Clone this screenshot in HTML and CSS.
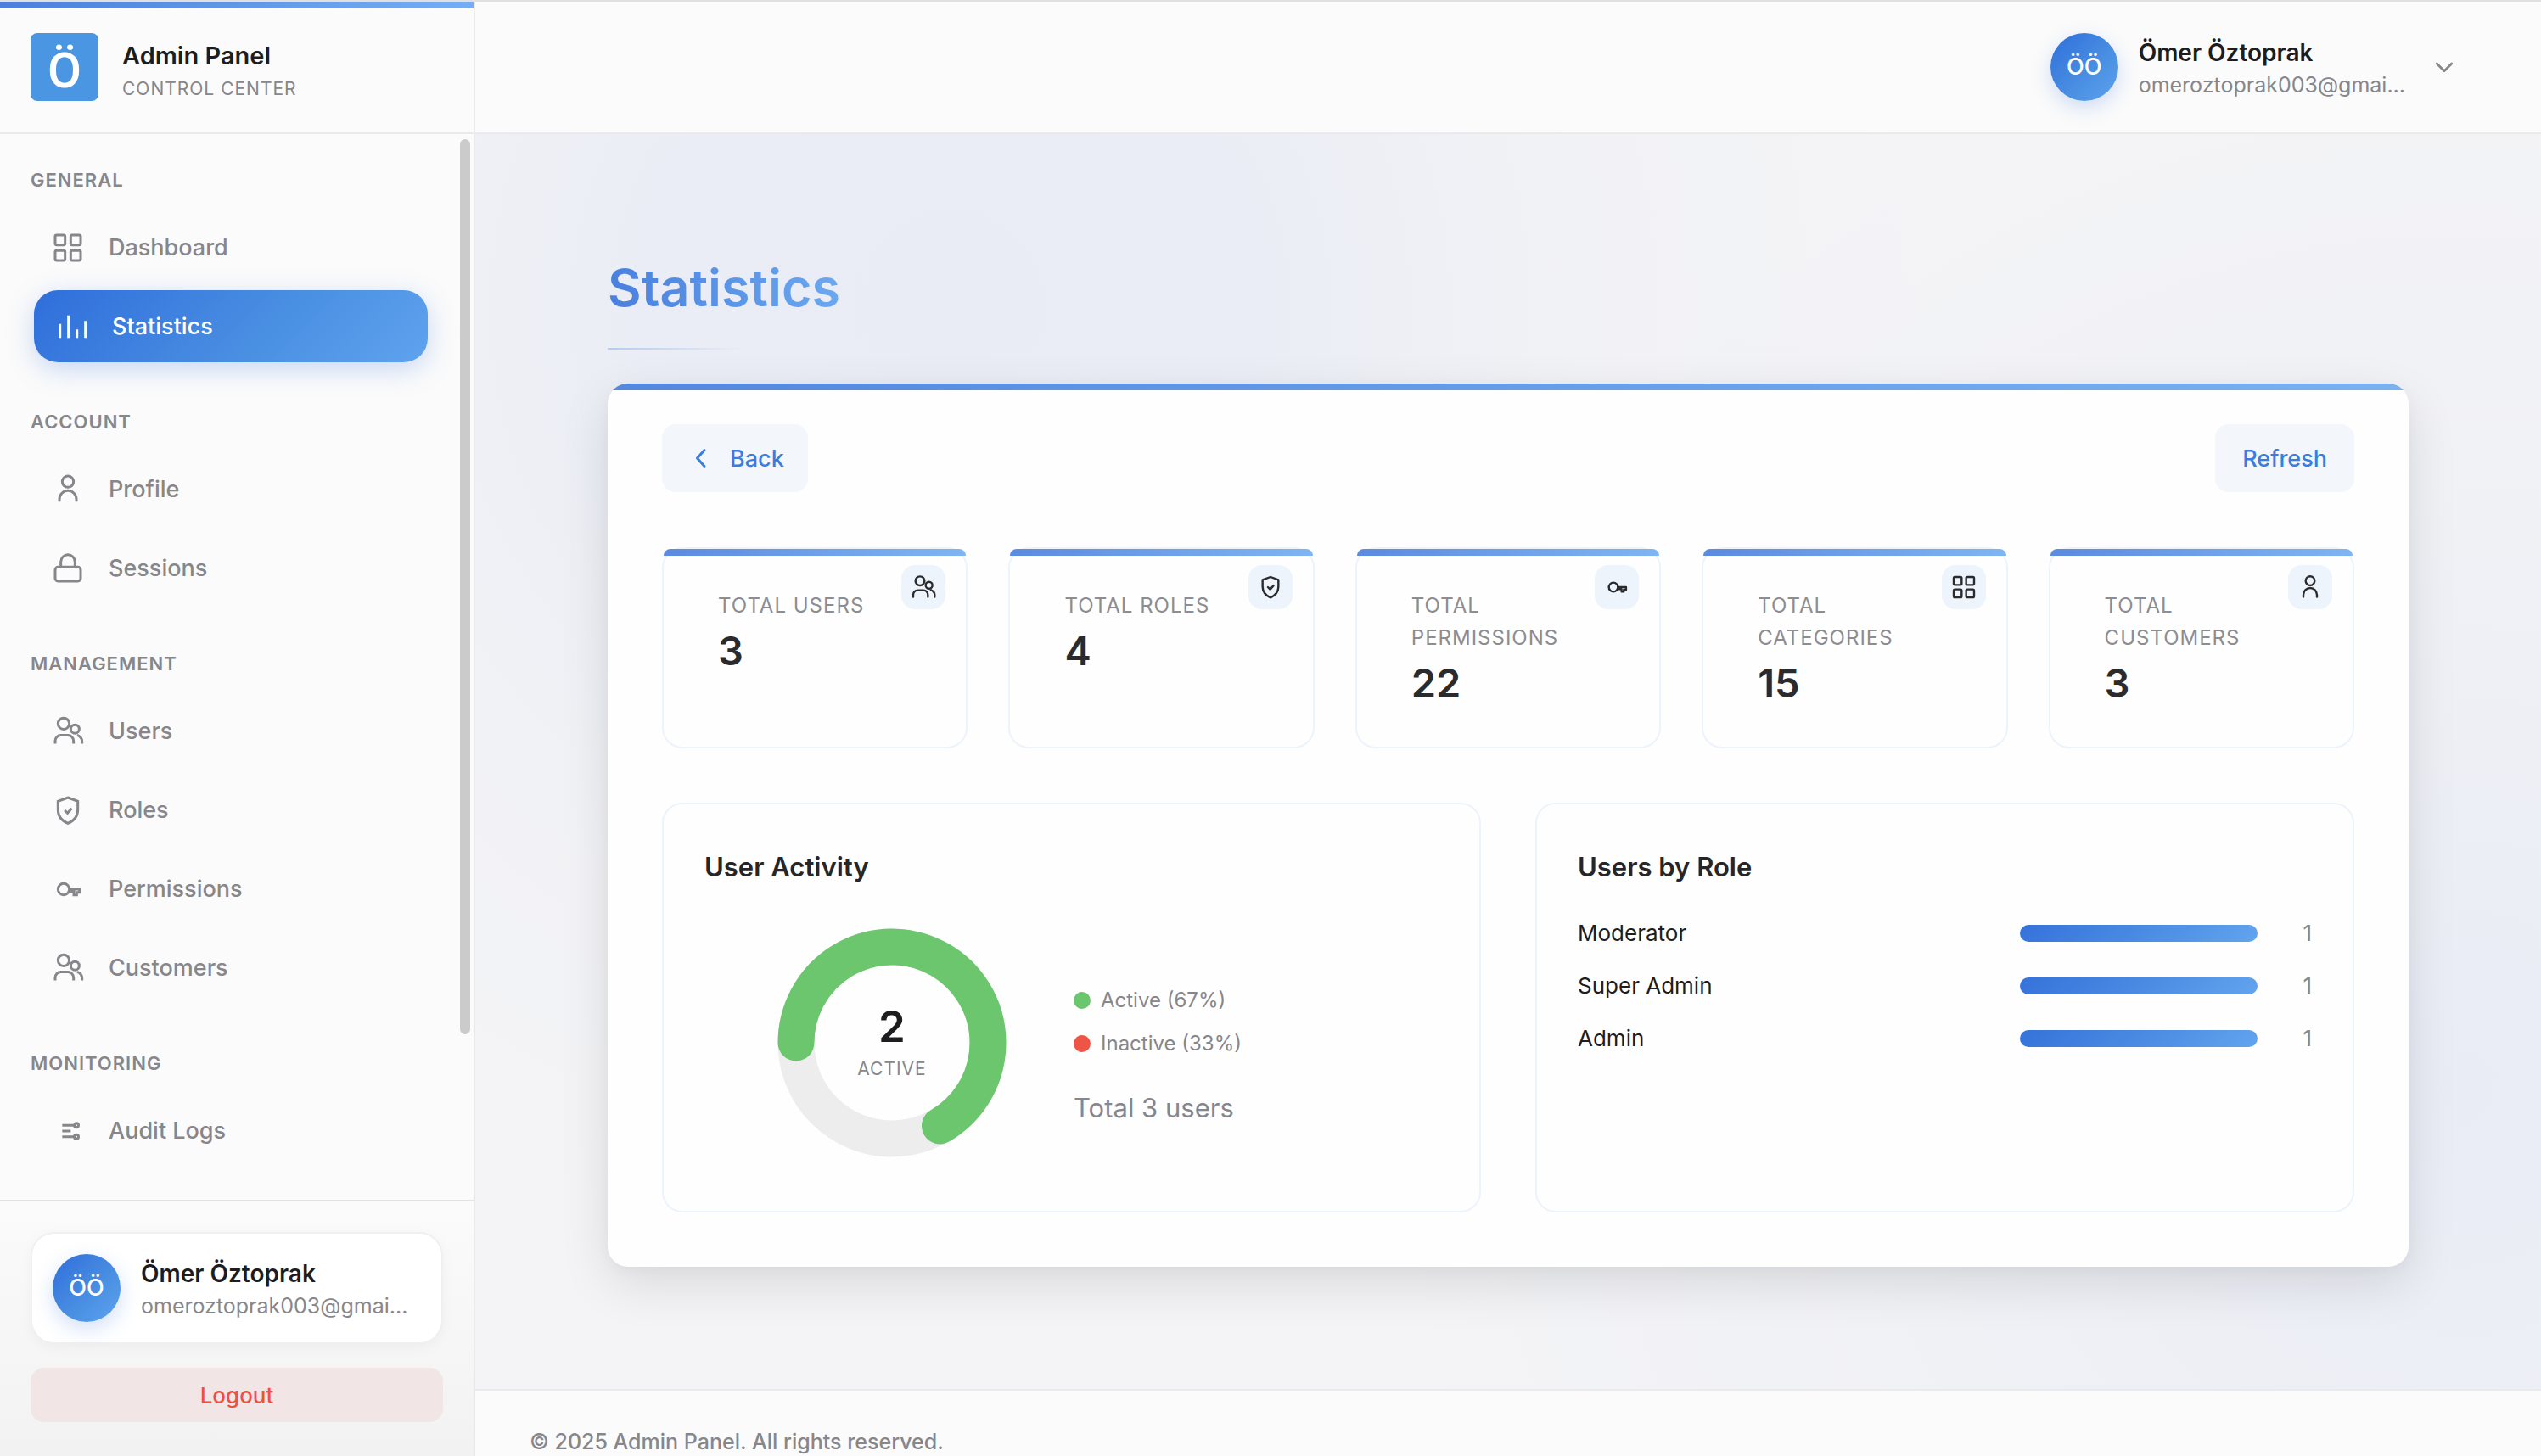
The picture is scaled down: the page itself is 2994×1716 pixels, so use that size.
FILE: index.html
```html
<!DOCTYPE html>
<html lang="en">
<head>
<meta charset="utf-8">
<title>Statistics - Admin Panel</title>
<link rel="stylesheet" href="styles.css">
</head>
<body>
<svg class="sprite" aria-hidden="true">
  <symbol id="i-grid" viewBox="0 0 24 24"><rect x="3" y="3" width="7" height="7" rx="1"/><rect x="14" y="3" width="7" height="7" rx="1"/><rect x="3" y="14" width="7" height="7" rx="1"/><rect x="14" y="14" width="7" height="7" rx="1"/></symbol>
  <symbol id="i-bars" viewBox="0 0 24 24"><path d="M4 20V10M10 20V4M16 20v-6M22 20V8"/></symbol>
  <symbol id="i-user" viewBox="0 0 24 24"><circle cx="12" cy="6.4" r="4"/><path d="M6 20.600v-1.800a6 6 0 0 1 12 0v1.800"/></symbol>
  <symbol id="i-lock" viewBox="0 0 24 24"><rect x="3" y="11" width="18" height="10" rx="2"/><path d="M7 11V7.300a5 5 0 0 1 10 0V11"/></symbol>
  <symbol id="i-users" viewBox="0 0 24 24"><circle cx="9" cy="6.500" r="4"/><circle cx="17" cy="10.300" r="3"/><path d="M3 20.700v-2a4 4 0 0 1 4-4h5a4 4 0 0 1 4 4v2M18.600 14.600c2 .7 3.400 2.200 3.400 4.600v1.500"/></symbol>
  <symbol id="i-shield" viewBox="0 0 24 24"><path d="M12 3l7 2.600v5.900c0 4.600-2.900 8-7 9.700-4.100-1.700-7-5.100-7-9.700V5.600z"/><path d="M9.700 12l2 2 3-3.400"/></symbol>
  <symbol id="i-key" viewBox="0 0 24 24"><circle cx="9" cy="12" r="4"/><path d="M13 12h7.200v2.200h-2V16h-2v-2.200H13"/></symbol>
  <symbol id="i-log" viewBox="0 0 24 24"><path d="M8 8h8.500M8 12h6M8 16h8.500"/><circle cx="18" cy="8" r="1.500"/><circle cx="18" cy="16" r="1.500"/></symbol>
</svg>
<div class="app">
  <aside class="sidebar">
    <div class="brand">
      <span class="brand-logo" aria-hidden="true">Ö</span>
      <div class="brand-text">
        <div class="brand-name">Admin Panel</div>
        <div class="brand-sub">CONTROL CENTER</div>
      </div>
    </div>
    <nav class="nav">
      <section class="nav-section">
        <h2 class="nav-title">GENERAL</h2>
        <a class="nav-item" href="#"><svg class="icon"><use href="#i-grid"/></svg>Dashboard</a>
        <a class="nav-item active" href="#"><svg class="icon"><use href="#i-bars"/></svg>Statistics</a>
      </section>
      <section class="nav-section">
        <h2 class="nav-title">ACCOUNT</h2>
        <a class="nav-item" href="#"><svg class="icon"><use href="#i-user"/></svg>Profile</a>
        <a class="nav-item" href="#"><svg class="icon"><use href="#i-lock"/></svg>Sessions</a>
      </section>
      <section class="nav-section">
        <h2 class="nav-title">MANAGEMENT</h2>
        <a class="nav-item" href="#"><svg class="icon"><use href="#i-users"/></svg>Users</a>
        <a class="nav-item" href="#"><svg class="icon"><use href="#i-shield"/></svg>Roles</a>
        <a class="nav-item" href="#"><svg class="icon"><use href="#i-key"/></svg>Permissions</a>
        <a class="nav-item" href="#"><svg class="icon"><use href="#i-users"/></svg>Customers</a>
      </section>
      <section class="nav-section">
        <h2 class="nav-title">MONITORING</h2>
        <a class="nav-item" href="#"><svg class="icon"><use href="#i-log"/></svg>Audit Logs</a>
      </section>
      <span class="scroll-thumb"></span>
    </nav>
    <div class="sidebar-foot">
      <div class="user-card">
        <span class="avatar">ÖÖ</span>
        <div class="user-text">
          <div class="user-name">Ömer Öztoprak</div>
          <div class="user-mail">omeroztoprak003@gmai...</div>
        </div>
      </div>
      <button class="logout" type="button">Logout</button>
    </div>
  </aside>
  <div class="content">
    <header class="topbar">
      <button class="user-menu" type="button">
        <span class="avatar">ÖÖ</span>
        <span class="user-text">
          <span class="user-name">Ömer Öztoprak</span>
          <span class="user-mail">omeroztoprak003@gmai...</span>
        </span>
        <svg class="chevron" viewBox="0 0 24 24"><path d="M4.500 8.500l7.500 7.500 7.500-7.500"/></svg>
      </button>
    </header>
    <main class="main">
      <h1 class="page-title"><span>Statistics</span></h1>
      <div class="sheet">
        <div class="toolbar">
          <button class="btn btn-back" type="button"><svg class="back-icon" viewBox="0 0 24 24"><path d="M18 2.500l-8.500 9.500 8.500 9.500"/></svg>Back</button>
          <button class="btn" type="button">Refresh</button>
        </div>
        <div class="stats">
          <article class="stat"><div class="stat-label">TOTAL USERS</div><div class="stat-value">3</div><span class="stat-icon"><svg><use href="#i-users"/></svg></span></article>
          <article class="stat"><div class="stat-label">TOTAL ROLES</div><div class="stat-value">4</div><span class="stat-icon"><svg><use href="#i-shield"/></svg></span></article>
          <article class="stat"><div class="stat-label">TOTAL PERMISSIONS</div><div class="stat-value">22</div><span class="stat-icon"><svg><use href="#i-key"/></svg></span></article>
          <article class="stat"><div class="stat-label">TOTAL CATEGORIES</div><div class="stat-value">15</div><span class="stat-icon"><svg><use href="#i-grid"/></svg></span></article>
          <article class="stat"><div class="stat-label">TOTAL CUSTOMERS</div><div class="stat-value">3</div><span class="stat-icon"><svg><use href="#i-user"/></svg></span></article>
        </div>
        <div class="panels">
          <section class="panel">
            <h2 class="panel-title">User Activity</h2>
            <div class="activity">
              <div class="donut">
                <svg viewBox="0 0 270 270">
                  <circle class="donut-track" cx="135" cy="135" r="113"/>
                  <path class="donut-value" d="M22 135A113 113 0 1 1 191.500 232.900"/>
                </svg>
                <div class="donut-label"><strong>2</strong><span>ACTIVE</span></div>
              </div>
              <div class="legend">
                <ul>
                  <li><i class="dot dot-on"></i>Active (67%)</li>
                  <li><i class="dot dot-off"></i>Inactive (33%)</li>
                </ul>
                <p>Total 3 users</p>
              </div>
            </div>
          </section>
          <section class="panel">
            <h2 class="panel-title">Users by Role</h2>
            <ul class="roles">
              <li><span class="role">Moderator</span><span class="track"><span class="fill" style="width:100%"></span></span><span class="count">1</span></li>
              <li><span class="role">Super Admin</span><span class="track"><span class="fill" style="width:100%"></span></span><span class="count">1</span></li>
              <li><span class="role">Admin</span><span class="track"><span class="fill" style="width:100%"></span></span><span class="count">1</span></li>
            </ul>
          </section>
        </div>
      </div>
    </main>
    <footer class="footer">© 2025 Admin Panel. All rights reserved.</footer>
  </div>
</div>
</body>
</html>
```
FILE: styles.css
```css
:root {
  --ink: #1d1d1f;
  --muted: #86868b;
  --surface: #fbfbfb;
  --line: #eaeaeb;
  --card-line: #edf3fc;
  --blue: #3a7ce0;
  --grad: linear-gradient(135deg, #2f6edb 0%, #4a90e2 60%, #5fa3ef 100%);
}

* { box-sizing: border-box; }

body {
  margin: 0;
  font-family: Inter, "Liberation Sans", sans-serif;
  font-size: 28px;
  color: var(--ink);
  background: var(--surface);
}

h1, h2, p, ul { margin: 0; padding: 0; }
ul { list-style: none; }
button { font: inherit; border: 0; cursor: pointer; }
a { text-decoration: none; }
svg { fill: none; stroke: currentColor; stroke-width: 1.8; display: block; flex: none; }
.sprite { position: absolute; width: 0; height: 0; }

.app {
  display: flex;
  height: 100vh;
  border-top: 2px solid #e0e0e0;
}

/* Sidebar */
.sidebar {
  width: 560px;
  flex: none;
  display: flex;
  flex-direction: column;
  position: relative;
  background: var(--surface);
  border-right: 2px solid var(--line);
}
.sidebar::before {
  content: "";
  position: absolute;
  inset: 0 0 auto;
  height: 8px;
  background: linear-gradient(90deg, #4c7fdc, #5f98e8 50%, #74adf3);
}
.brand {
  height: 156px;
  flex: none;
  display: flex;
  align-items: center;
  gap: 28px;
  padding: 0 36px;
  border-bottom: 2px solid var(--line);
}
.brand-logo {
  width: 80px;
  height: 80px;
  border-radius: 8px;
  background: #4a96e3;
  color: #fff;
  font: 500 58px/88px Roboto, sans-serif;
  text-align: center;
}
.brand-text { padding-top: 12px; line-height: 39px; }
.brand-name { font-size: 29px; font-weight: 600; }
.brand-sub { font-size: 21px; letter-spacing: 1px; color: var(--muted); }

.nav {
  flex: 1;
  min-height: 0;
  overflow: hidden;
  position: relative;
  padding: 41px 52px 0 36px;
}
.nav-section { display: flex; flex-direction: column; gap: 8px; margin-bottom: 57px; }
.nav-title {
  margin-bottom: 16px;
  font-size: 22px;
  line-height: 26px;
  font-weight: 600;
  letter-spacing: 1px;
  color: var(--muted);
}
.nav-item {
  display: flex;
  align-items: center;
  gap: 28px;
  height: 85px;
  padding: 0 24px;
  border-radius: 28px;
  color: var(--muted);
  font-size: 27px;
  font-weight: 500;
}
.nav-item.active {
  margin: 0 2px 0 4px;
  color: #fff;
  background: var(--grad);
  box-shadow: 0 8px 32px rgba(47, 110, 219, .25);
}
.icon { width: 40px; height: 40px; }
.scroll-thumb {
  position: absolute;
  top: 6px;
  right: 4px;
  width: 12px;
  height: 84%;
  border-radius: 6px;
  background: #cbcbcb;
}

.sidebar-foot {
  flex: none;
  display: flex;
  flex-direction: column;
  gap: 28px;
  padding: 36px 36px 40px;
  border-top: 2px solid #e2e2e2;
  background: linear-gradient(#fbfbfb, #f2f2f2);
}
.user-card {
  display: flex;
  align-items: center;
  gap: 24px;
  padding: 24px;
  background: #fff;
  border: 2px solid #f0f0f0;
  border-radius: 28px;
  box-shadow: 0 4px 16px rgba(0, 0, 0, .04);
}
.avatar {
  width: 80px;
  height: 80px;
  flex: none;
  border-radius: 50%;
  background: var(--grad);
  box-shadow: 0 8px 24px rgba(47, 110, 219, .22);
  color: #fff;
  font-size: 27px;
  font-weight: 500;
  line-height: 80px;
  text-align: center;
}
.user-text { display: flex; flex-direction: column; padding-top: 3px; line-height: 38px; text-align: left; white-space: nowrap; }
.user-name { font-weight: 600; color: var(--ink); }
.user-mail { font-size: 25px; color: var(--muted); }
.logout {
  height: 64px;
  border-radius: 16px;
  background: #f2e5e5;
  color: #ee5140;
  font-size: 26px;
  font-weight: 500;
}

/* Content column */
.content {
  flex: 1;
  min-width: 0;
  display: flex;
  flex-direction: column;
  overflow: hidden;
}
.topbar {
  height: 156px;
  flex: none;
  display: flex;
  align-items: center;
  justify-content: flex-end;
  padding: 0 100px 0 64px;
  border-bottom: 2px solid var(--line);
}
.user-menu { display: flex; align-items: center; gap: 24px; padding: 0; background: none; }
.user-menu .user-text { padding-right: 8px; }
.chevron { width: 28px; height: 28px; color: var(--muted); stroke-width: 2.4; stroke-linecap: round; stroke-linejoin: round; }

.main {
  flex: none;
  padding: 144px 156px;
  background:
    radial-gradient(circle at 23% 14%, rgba(60, 110, 226, .06) 0, rgba(60, 110, 226, .05) 360px, rgba(60, 110, 226, .01) 760px, rgba(60, 110, 226, 0) 1200px),
    radial-gradient(circle at 96% 76%, rgba(60, 110, 226, .06) 0, rgba(60, 110, 226, .02) 700px, rgba(60, 110, 226, 0) 1300px),
    #f4f4f6;
}
.page-title {
  position: relative;
  padding-bottom: 36px;
  margin-bottom: 40px;
  font-size: 61px;
  line-height: 74px;
  font-weight: 600;
}
.page-title span {
  background: linear-gradient(90deg, #4a80dd, #6aa8f0);
  -webkit-background-clip: text;
  background-clip: text;
  color: transparent;
}
.page-title::after {
  content: "";
  position: absolute;
  left: 0;
  bottom: 0;
  width: 160px;
  height: 2px;
  background: linear-gradient(90deg, #b4cbf0, rgba(180, 203, 240, 0));
}

.sheet {
  padding: 48px 64px 64px;
  border-radius: 24px;
  background: linear-gradient(90deg, #5487de, #7ab1f1) top / 100% 8px no-repeat #fefefe;
  box-shadow: 0 20px 60px rgba(0, 0, 0, .11), 0 4px 16px rgba(0, 0, 0, .03);
}
.toolbar { display: flex; justify-content: space-between; margin-bottom: 65px; }
.btn {
  display: flex;
  align-items: center;
  gap: 24px;
  height: 80px;
  padding: 0 32px;
  border-radius: 16px;
  background: #f3f6fb;
  color: var(--blue);
  font-size: 27px;
  font-weight: 500;
}
.btn-back { padding-right: 28px; }
.back-icon { width: 24px; height: 24px; stroke-width: 3; stroke-linecap: round; stroke-linejoin: round; }

.stats {
  display: grid;
  grid-template-columns: repeat(5, 1fr);
  gap: 48px;
  margin-bottom: 64px;
}
.stat {
  position: relative;
  min-height: 237px;
  padding: 48px 64px 24px;
  border: 2px solid var(--card-line);
  border-radius: 24px;
  background: #fefefe;
}
.stat::before {
  content: "";
  position: absolute;
  inset: 0 0 auto;
  height: 8px;
  border-radius: 8px 8px 0 0;
  background: linear-gradient(90deg, #5b8be0, #7fb5f2);
}
.stat-label { font-size: 24px; line-height: 38px; letter-spacing: 1px; color: #8c8c91; }
.stat-value { font-size: 47px; line-height: 68px; font-weight: 600; color: #2b2b2d; }
.stat-icon {
  position: absolute;
  top: 19px;
  right: 24px;
  width: 52px;
  height: 52px;
  display: grid;
  place-items: center;
  border-radius: 16px;
  background: #edf4fc;
  color: #2b2b2d;
}
.stat-icon svg { width: 32px; height: 32px; stroke-linecap: round; stroke-linejoin: round; }

.panels { display: grid; grid-template-columns: 1fr 1fr; gap: 64px; }
.panel {
  padding: 48px;
  border: 2px solid var(--card-line);
  border-radius: 24px;
}
.panel-title { font-size: 31px; line-height: 52px; font-weight: 600; color: #262628; }
.activity { display: flex; align-items: center; gap: 79px; padding: 46px 0 15px 86px; }
.donut { position: relative; width: 270px; height: 270px; }
.donut svg { width: 100%; height: 100%; }
.donut-track { stroke: #ededee; stroke-width: 43; }
.donut-value { stroke: #6bc66d; stroke-width: 43; stroke-linecap: round; }
.donut-label {
  position: absolute;
  inset: 0;
  display: flex;
  flex-direction: column;
  align-items: center;
  justify-content: center;
}
.donut-label strong { font-size: 51px; line-height: 62px; font-weight: 600; }
.donut-label span { font-size: 21px; line-height: 38px; letter-spacing: 1px; color: var(--muted); }
.legend { padding-top: 32px; font-size: 24px; color: var(--muted); }
.legend li { display: flex; align-items: center; gap: 12px; line-height: 39px; margin-bottom: 12px; }
.legend p { margin-top: 32px; font-size: 31px; line-height: 50px; }
.dot { width: 20px; height: 20px; border-radius: 50%; }
.dot-on { background: #6bc66d; }
.dot-off { background: #ee5545; }

.roles { display: grid; gap: 24px; padding-top: 33px; }
.roles li {
  display: grid;
  grid-template-columns: 1fr 280px 40px;
  align-items: center;
  gap: 24px;
  line-height: 38px;
  font-size: 26px;
}
.track { height: 20px; border-radius: 10px; overflow: hidden; background: #ededee; }
.fill { display: block; height: 100%; background: linear-gradient(135deg, #3672da, #4a8ae2 50%, #62a4ee); }
.count { text-align: right; color: var(--muted); }

.footer {
  flex: none;
  padding: 40px 64px;
  border-top: 2px solid var(--line);
  background: var(--surface);
  color: var(--muted);
  font-size: 25px;
  font-weight: 500;
  line-height: 40px;
}
```
